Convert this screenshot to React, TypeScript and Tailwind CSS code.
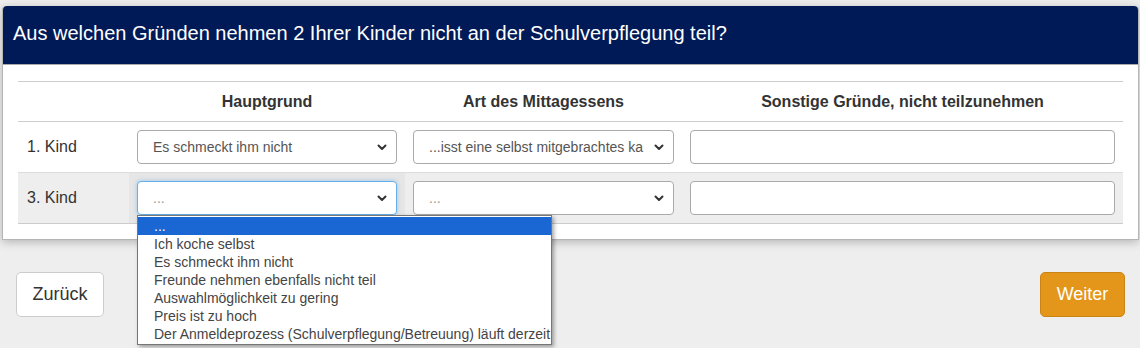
import { useState } from 'react'

const options = [
  '...',
  'Ich koche selbst',
  'Es schmeckt ihm nicht',
  'Freunde nehmen ebenfalls nicht teil',
  'Auswahlmöglichkeit zu gering',
  'Preis ist zu hoch',
  'Der Anmeldeprozess (Schulverpflegung/Betreuung) läuft derzeit',
]

function Chevron() {
  return (
    <svg width="10" height="7" viewBox="0 0 10 7" fill="none" stroke="#333" strokeWidth="2" strokeLinecap="round" strokeLinejoin="round">
      <polyline points="1.5 1.5 5 5 8.5 1.5" />
    </svg>
  )
}

function FakeSelect({ value, focused, muted }: { value: string; focused?: boolean; muted?: boolean }) {
  return (
    <div
      className={`flex items-center h-[34px] pl-[15px] pr-[9px] bg-white rounded-[4px] border ${
        focused ? 'border-[#66afe9] shadow-[0_0_4px_rgba(102,175,233,0.6)]' : 'border-[#aaa]'
      }`}
    >
      <span className={`flex-1 overflow-hidden whitespace-nowrap text-[14px] ${muted ? 'text-[#999]' : 'text-[#555]'}`}>{value}</span>
      <span className="pl-[6px]"><Chevron /></span>
    </div>
  )
}

export default function App() {
  const [active] = useState(0)

  return (
    <div className="w-[1140px] h-[348px] bg-[#eeeeee] overflow-hidden relative" style={{ fontFamily: '"Liberation Sans", Arial, sans-serif' }}>
      <div className="pt-[6px] pl-[2px] pr-[1px]">
        {/* Card */}
        <div className="bg-white rounded-t-[4px] border-r border-b border-l border-[#b5b5b5] shadow-[0_2px_10px_rgba(0,0,0,0.25)]">
          <div className="h-[59px] bg-[#001a57] rounded-t-[4px] px-[10px] pt-[12px] text-white text-[20px] border-b border-[#aaa]">
            Aus welchen Gründen nehmen 2 Ihrer Kinder nicht an der Schulverpflegung teil?
          </div>

          <div className="px-[15px] pt-[16px] pb-[15px]">
            <div className="grid grid-cols-[111px_276px_277px_1fr] border-t border-[#ccc] text-[#333]">
              {/* header row */}
              <div className="h-[40px] border-b border-[#ccc]" />
              <div className="h-[40px] border-b border-[#ccc] flex items-center justify-center font-bold text-[16px]">Hauptgrund</div>
              <div className="h-[40px] border-b border-[#ccc] flex items-center justify-center font-bold text-[16px]">Art des Mittagessens</div>
              <div className="h-[40px] border-b border-[#ccc] flex items-center justify-center font-bold text-[16px]">Sonstige Gründe, nicht teilzunehmen</div>

              {/* row 1 */}
              <div className="h-[51px] border-b border-[#ddd] flex items-center pl-[9px] text-[16px]">1. Kind</div>
              <div className="h-[51px] border-b border-[#ddd] flex items-center px-[8px]">
                <div className="w-full"><FakeSelect value="Es schmeckt ihm nicht" /></div>
              </div>
              <div className="h-[51px] border-b border-[#ddd] flex items-center px-[8px]">
                <div className="w-full"><FakeSelect value="...isst eine selbst mitgebrachtes ka" /></div>
              </div>
              <div className="h-[51px] border-b border-[#ddd] flex items-center px-[8px]">
                <div className="w-full h-[34px] rounded-[4px] border border-[#aaa] bg-white" />
              </div>

              {/* row 2 */}
              <div className="h-[51px] border-b border-[#ccc] bg-[#eeeeee] flex items-center pl-[9px] text-[16px]">3. Kind</div>
              <div className="h-[51px] border-b border-[#ccc] bg-[#e6e6e6] flex items-center px-[8px] relative">
                <div className="w-full"><FakeSelect value="..." focused muted /></div>
                {/* open option list */}
                <div className="absolute left-[8px] top-[42px] w-[415px] z-10 bg-white border border-[#767676] shadow-[2px_2px_4px_rgba(0,0,0,0.35)] py-[1px]">
                  {options.map((o, i) => (
                    <div
                      key={o}
                      className={`h-[18px] leading-[18px] pl-[16px] text-[14px] whitespace-nowrap ${
                        i === active ? 'bg-[#1a66d2] text-white' : 'text-[#444]'
                      }`}
                    >
                      {o}
                    </div>
                  ))}
                </div>
              </div>
              <div className="h-[51px] border-b border-[#ccc] bg-[#eeeeee] flex items-center px-[8px]">
                <div className="w-full"><FakeSelect value="..." muted /></div>
              </div>
              <div className="h-[51px] border-b border-[#ccc] bg-[#eeeeee] flex items-center px-[8px]">
                <div className="w-full h-[34px] rounded-[4px] border border-[#aaa] bg-white" />
              </div>
            </div>
          </div>
        </div>
      </div>

      {/* Navigation */}
      <div className="flex justify-between items-center pl-[16px] pr-[15px] mt-[32px]">
        <button className="w-[88px] h-[45px] bg-white border border-[#ccc] rounded-[5px] text-[18px] text-[#333]">Zurück</button>
        <button className="w-[85px] h-[45px] bg-[#e3961a] border border-[#c98415] rounded-[5px] text-[18px] text-white">Weiter</button>
      </div>
    </div>
  )
}
